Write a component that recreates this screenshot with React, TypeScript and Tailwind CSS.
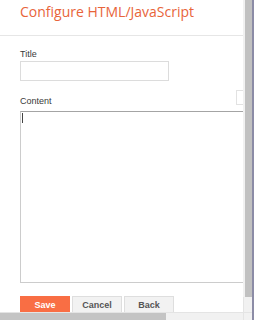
import React from 'react';

const App: React.FC = () => {
    return (
        <div className="w-[254px] h-[320px] overflow-hidden bg-white flex">
            <div className="w-[243px] flex flex-col">
                {/* Page content, clipped on the right and bottom */}
                <div className="flex-1 min-h-0 overflow-hidden">
                    <div className="h-[36px] border-b border-[#e6e6e6] pl-[20px] pt-[2px]">
                        <h1 className="text-[14px] leading-[20px] text-[#e8643a] whitespace-nowrap" style={{ fontFamily: '"Open Sans", sans-serif' }}>
                            Configure HTML/JavaScript
                        </h1>
                    </div>

                    <div className="pl-[20px] pt-[12px]" style={{ fontFamily: '"Liberation Sans", Arial, sans-serif' }}>
                        <div className="text-[9px] leading-[12px] text-[#3a3a3a]">Title</div>
                        <input className="block mt-[1px] w-[149px] h-[20px] border border-[#dcdcdc] outline-none" />

                        <div className="relative mt-[14px]">
                            <div className="text-[9px] leading-[12px] text-[#3a3a3a]">Content</div>
                            <div className="absolute right-0 top-[-5px] w-[7px] h-[15px] border border-r-0 border-[#e2e2e2] bg-white" />
                        </div>
                        <div className="mt-[4px] w-[240px] h-[172px] border border-[#cccccc] border-t-[#a4a4a4] relative">
                            <div className="absolute left-[1px] top-[1px] w-px h-[10px] bg-[#444]" />
                        </div>

                        <div className="mt-[13px] flex gap-[2px] text-[9px] font-bold">
                            <button className="w-[50px] h-[20px] bg-[#f96e44] text-white">Save</button>
                            <button className="w-[50px] h-[20px] bg-[#f2f2f2] border border-[#dedede] text-[#555]">Cancel</button>
                            <button className="w-[50px] h-[20px] bg-[#f2f2f2] border border-[#dedede] text-[#555]">Back</button>
                        </div>
                    </div>
                </div>

                {/* Horizontal scrollbar */}
                <div className="h-[8px] shrink-0 flex bg-[#f1f1f1] border-t border-[#e4e4e4]">
                    <div className="w-[166px] bg-[#c4c4c4]" />
                </div>
            </div>

            {/* Vertical scrollbar */}
            <div className="w-[11px] flex flex-col bg-[#f1f1f1] border-r-2 border-[#8c8ca6]">
                <div className="h-[297px] ml-[2px] bg-[#c1c1c1]" />
                <div className="flex-1 border-l border-[#e4e4e4]" />
                <div className="h-[8px] border-t border-l border-[#e4e4e4]" />
            </div>
        </div>
    );
};

export default App;
